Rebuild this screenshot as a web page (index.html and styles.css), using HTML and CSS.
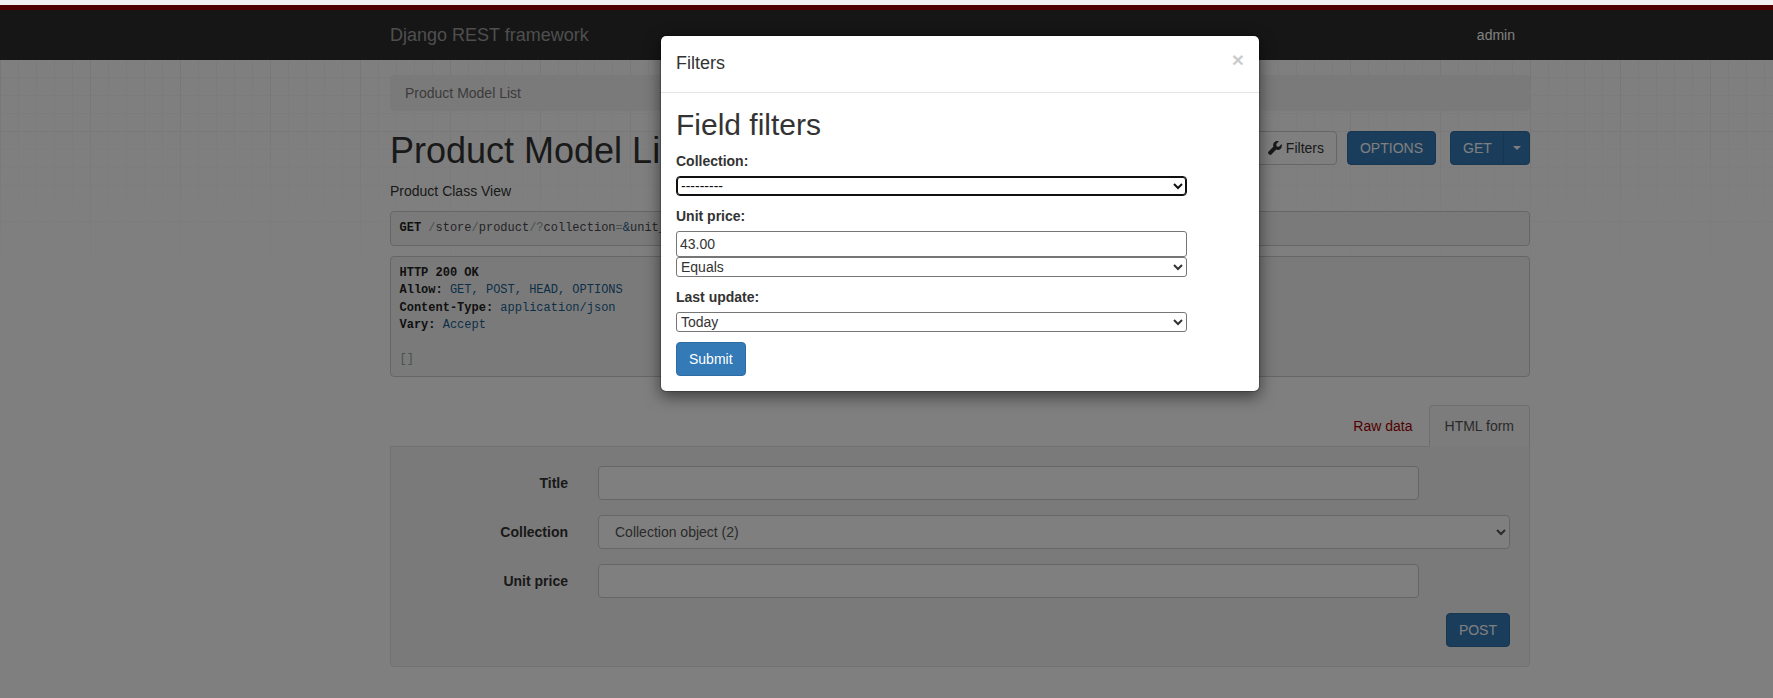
FILE: index.html
```html
<!DOCTYPE html>
<html>
<head>
<meta charset="utf-8">
<title>Product Model List</title>
<link rel="stylesheet" href="styles.css">
</head>
<body>

<div class="navbar">
  <div class="container navbar-row">
    <a class="brand">Django REST framework</a>
    <a class="user">admin</a>
  </div>
</div>

<div class="container">
  <div class="breadcrumb">Product Model List</div>

  <div class="head-row">
    <h1>Product Model List</h1>
    <div class="actions">
      <button class="btn btn-default"><svg class="wrench" viewBox="0 0 14 14"><path d="M13.6 3.1 11 5.7 8.6 5.4 8.3 3 10.9.4C9.3-.2 7.5.1 6.3 1.3 5.1 2.5 4.8 4.2 5.4 5.7L.4 10.7C-.1 11.3-.1 12.2.4 12.8L1.2 13.6C1.8 14.1 2.7 14.1 3.3 13.6L8.3 8.6C9.8 9.2 11.5 8.9 12.7 7.7 13.9 6.5 14.2 4.7 13.6 3.1Z"/></svg> Filters</button>
      <button class="btn btn-primary">OPTIONS</button>
      <div class="btn-group">
        <button class="btn btn-primary btn-main">GET</button>
        <button class="btn btn-primary btn-caret"><span class="caret"></span></button>
      </div>
    </div>
  </div>

  <p class="view-desc">Product Class View</p>

  <pre class="code"><b>GET</b> <span class="pun">/</span><span class="pln">store</span><span class="pun">/</span><span class="pln">product</span><span class="pun">/?</span><span class="pln">collection</span><span class="pun">=</span><span class="lit">&amp;</span><span class="pln">unit_price</span><span class="pun">=</span><span class="lit">43.00&amp;</span><span class="pln">unit_price_lookup</span><span class="pun">=</span><span class="lit">exact&amp;</span><span class="pln">last_update</span><span class="pun">=</span><span class="lit">today</span></pre>

  <pre class="code"><b>HTTP 200 OK</b>
<b>Allow:</b> <span class="lit">GET, POST, HEAD, OPTIONS</span>
<b>Content-Type:</b> <span class="lit">application/json</span>
<b>Vary:</b> <span class="lit">Accept</span>

<span class="pun">[]</span></pre>

  <div class="tabs">
    <a class="tab">Raw data</a>
    <a class="tab tab-active">HTML form</a>
  </div>

  <div class="well">
    <div class="form-row">
      <label class="form-label">Title</label>
      <input class="form-control short" type="text">
    </div>
    <div class="form-row">
      <label class="form-label">Collection</label>
      <select class="form-control"><option>Collection object (2)</option></select>
    </div>
    <div class="form-row">
      <label class="form-label">Unit price</label>
      <input class="form-control short" type="text">
    </div>
    <div class="form-actions">
      <button class="btn btn-primary">POST</button>
    </div>
  </div>
</div>

<div class="backdrop"></div>

<div class="modal">
  <div class="modal-dialog">
    <div class="modal-header">
      <button class="close">&times;</button>
      <h4 class="modal-title">Filters</h4>
    </div>
    <div class="modal-body">
      <h2>Field filters</h2>
      <div class="field">
        <label>Collection:</label>
        <select class="plain focused"><option>---------</option></select>
      </div>
      <div class="field">
        <label>Unit price:</label>
        <input class="plain plain-input" type="text" value="43.00">
        <select class="plain"><option>Equals</option></select>
      </div>
      <div class="field">
        <label>Last update:</label>
        <select class="plain"><option>Today</option></select>
      </div>
      <button class="btn btn-primary">Submit</button>
    </div>
  </div>
</div>

</body>
</html>
```

FILE: styles.css
```css
* {box-sizing: border-box;}
html {background-color: #F2F2F2; height: 100%; overflow: hidden;}
body {position: relative; width: 1920px; height: 693px; margin: 5px 0 0; overflow: hidden; font-family: "Liberation Sans", Arial, sans-serif; font-size: 14px; line-height: 20px; color: #333; background-color: #FFF;
  background-image: linear-gradient(to bottom, rgba(255,255,255,0) 60px, #FFF 295px), linear-gradient(to right, #EEE 1px, transparent 1px), linear-gradient(to bottom, #EEE 1px, transparent 1px), linear-gradient(to right, #F7F7F7 1px, transparent 1px), linear-gradient(to bottom, #F7F7F7 1px, transparent 1px);
  background-size: 100% 100%, 90px 100%, 100% 90px, 18px 100%, 100% 18px;
  background-position: 0 0, 0 0, 0 36px, 0 0, 0 0;}

.container {width: 1140px; margin: 0 auto;}

.navbar {height: 55px; margin-bottom: 15px; background-color: #2C2C2C; border-top: 5px solid #A30000;}
.navbar-row {display: flex; justify-content: space-between; align-items: center; height: 50px;}
.brand {font-size: 18px; color: #9D9D9D;}
.user {padding-right: 15px; color: #FFF;}

.breadcrumb {height: 36px; padding: 8px 15px; color: #777; background-color: #F5F5F5; border-radius: 4px;}

.head-row {display: flex; justify-content: space-between; align-items: flex-start; margin-top: 20px;}
h1 {margin: 0 0 10px; font-size: 36px; font-weight: 500; line-height: 39.6px;}
.actions {display: flex;}
.actions .btn-default {margin-right: 10px;}
.actions .btn-group {margin-left: 14px;}
.view-desc {margin: 0 0 10px;}

.btn {display: inline-block; height: 34px; padding: 6px 12px; font: inherit; line-height: 20px; border: 1px solid transparent; border-radius: 4px;}
.btn-default {color: #333; background-color: #FFF; border-color: #CCC;}
.btn-primary {color: #FFF; background-color: #337AB7; border-color: #2E6DA4;}
.btn-group {display: flex;}
.btn-main {width: 54px; border-radius: 4px 0 0 4px;}
.btn-caret {display: flex; align-items: center; justify-content: center; width: 27px; padding: 0; margin-left: -1px; border-radius: 0 4px 4px 0;}
.caret {border-top: 4px solid #FFF; border-left: 4px solid transparent; border-right: 4px solid transparent;}
.wrench {width: 14px; height: 14px; vertical-align: -2px; fill: #333;}

pre.code {margin: 0 0 10px; padding: 8.5px 8.5px 7.5px; font-family: "Liberation Mono", monospace; font-size: 12px; line-height: 17.14px; color: #48484C; background-color: #F5F5F5; border: 1px solid #CCC; border-radius: 4px;}
pre.code b {color: #222;}
.pun {color: #93A1A1;}
.pln {color: #48484C;}
.lit {color: #195F91;}

.tabs {display: flex; justify-content: flex-end; height: 42px; margin-top: 28.4px;}
.tab {height: 42px; padding: 10px 15px; color: #A30000; border: 1px solid transparent; border-bottom: 0;}
.tab-active {position: relative; color: #555; background-color: #F9F9F9; border-color: #DDD; border-radius: 4px 4px 0 0;}

.well {height: 221px; margin-top: -1px; padding: 19px; background-color: #F5F5F5; border: 1px solid #E3E3E3; border-radius: 0 0 4px 4px;}
.form-row {display: grid; grid-template-columns: 158px 1fr; column-gap: 30px; align-items: center; margin-bottom: 15px;}
.form-label {font-weight: bold; text-align: right;}
.form-control {display: block; width: 100%; height: 34px; padding: 6px 12px; font: inherit; color: #555; background-color: #FFF; border: 1px solid #CCC; border-radius: 4px;}
.form-control.short {width: 821px;}
.form-actions {display: flex; justify-content: flex-end;}

.backdrop {position: absolute; top: 0; left: 0; right: 0; bottom: 0; z-index: 10; background-color: rgba(0,0,0,.5);}
.modal {position: absolute; top: 0; left: 0; right: 0; bottom: 0; z-index: 11;}
.modal-dialog {width: 600px; margin: 30px auto; background-color: #FFF; border: 1px solid rgba(0,0,0,.2); border-radius: 6px; background-clip: padding-box; box-shadow: 0 5px 15px rgba(0,0,0,.5);}
.modal-header {padding: 15px; border-bottom: 1px solid #E5E5E5;}
.modal-title {margin: 0; font-size: 18px; font-weight: 500; line-height: 25.7px;}
.close {float: right; margin-top: -2px; padding: 0; font-family: inherit; font-size: 21px; font-weight: bold; line-height: 1; color: #000; text-shadow: 0 1px 0 #FFF; opacity: .2; background: transparent; border: 0;}
.modal-body {padding: 15px;}
.modal-body h2 {margin: 0 0 10px; font-size: 30px; font-weight: 500; line-height: 33px;}

.field {margin-bottom: 10px;}
.field label {display: block; margin-bottom: 5px; font-weight: bold;}
.plain {display: block; width: 511px; height: 20px; font: inherit; color: #333; background-color: #FFF; border: 1px solid #767676; border-radius: 3px;}
.plain-input {height: 26px; padding: 1px 3px;}
.plain.focused {color: #111; border-color: #101010; border-radius: 4px; box-shadow: inset 0 0 0 1px #101010;}
```
